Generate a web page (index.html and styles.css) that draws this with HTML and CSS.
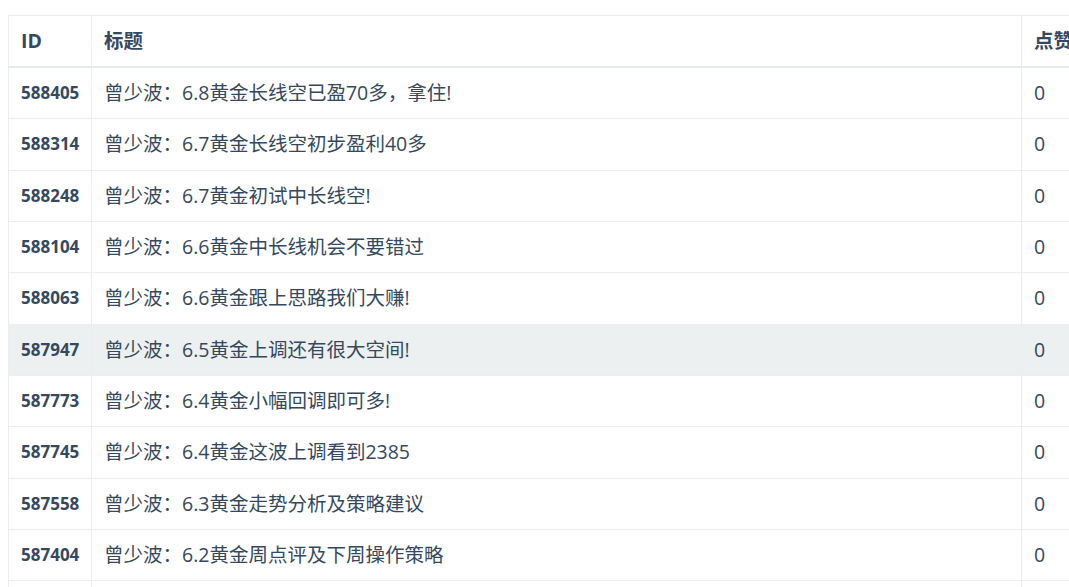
FILE: index.html
```html
<!DOCTYPE html>
<html lang="zh-CN">
<head>
<meta charset="utf-8">
<title>列表</title>
<link rel="stylesheet" href="styles.css">
</head>
<body>
<div class="wrap">
<table class="list">
<colgroup><col class="c-id"><col class="c-title"><col class="c-like"></colgroup>
<thead>
<tr><th>ID</th><th>标题</th><th>点赞</th></tr>
</thead>
<tbody>
<tr><td class="id">588405</td><td>曾少波：6.8黄金长线空已盈70多，拿住!</td><td>0</td></tr>
<tr><td class="id">588314</td><td>曾少波：6.7黄金长线空初步盈利40多</td><td>0</td></tr>
<tr><td class="id">588248</td><td>曾少波：6.7黄金初试中长线空!</td><td>0</td></tr>
<tr><td class="id">588104</td><td>曾少波：6.6黄金中长线机会不要错过</td><td>0</td></tr>
<tr><td class="id">588063</td><td>曾少波：6.6黄金跟上思路我们大赚!</td><td>0</td></tr>
<tr class="hover"><td class="id">587947</td><td>曾少波：6.5黄金上调还有很大空间!</td><td>0</td></tr>
<tr><td class="id">587773</td><td>曾少波：6.4黄金小幅回调即可多!</td><td>0</td></tr>
<tr><td class="id">587745</td><td>曾少波：6.4黄金这波上调看到2385</td><td>0</td></tr>
<tr><td class="id">587558</td><td>曾少波：6.3黄金走势分析及策略建议</td><td>0</td></tr>
<tr><td class="id">587404</td><td>曾少波：6.2黄金周点评及下周操作策略</td><td>0</td></tr>
<tr><td class="id">587300</td><td>曾少波：6.1黄金走势分析</td><td>0</td></tr>
</tbody>
</table>
</div>
</body>
</html>
```
FILE: styles.css
```css
html, body {
  margin: 0;
  padding: 0;
  background: #fff;
}
body {
  font-family: "Open Sans", "Noto Sans CJK SC", sans-serif;
  color: #34495e;
  font-size: 19.5px;
}
.wrap {
  padding: 15px 0 0 8px;
  width: 1200px;
}
.list {
  border-collapse: collapse;
  table-layout: fixed;
  width: 1113px;
}
.c-id { width: 83px; }
.c-title { width: 930px; }
.c-like { width: 100px; }
.list th,
.list td {
  border: 1px solid #eaeeef;
  padding: 12px 12px;
  line-height: 26.33px;
  text-align: left;
  vertical-align: middle;
  white-space: nowrap;
  overflow: hidden;
}
.list th {
  font-weight: 700;
  border-bottom: 2px solid #e7ebec;
  line-height: 26px;
}
.list td {
  font-size: 19.5px;
}
.list td.id {
  font-weight: 700;
  font-size: 17px;
}
.list tr.hover td {
  background: #ecf0f1;
}
```
